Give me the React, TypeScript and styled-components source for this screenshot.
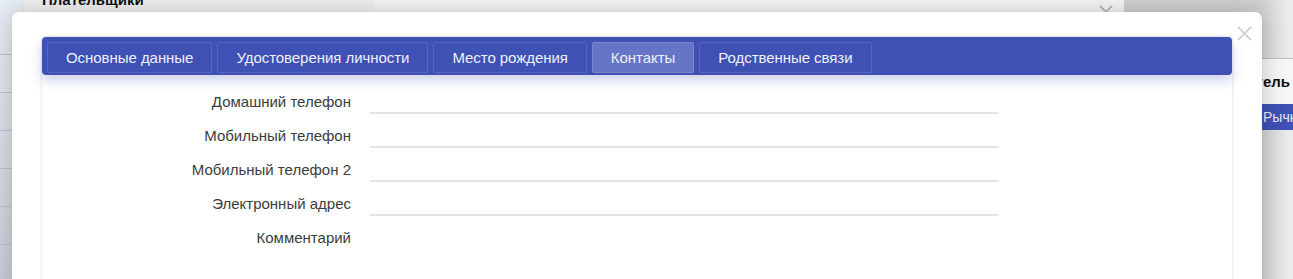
import styled, { createGlobalStyle } from 'styled-components'

const GlobalStyle = createGlobalStyle`
    html, body {
        margin: 0;
        padding: 0;
        width: 1293px;
        height: 279px;
        overflow: hidden;
        font-family: 'Liberation Sans', Arial, sans-serif;
    }
`

const Page = styled.div`
    position: relative;
    display: flex;
    width: 1293px;
    height: 279px;
    overflow: hidden;
    background: #ededed;
`

const Strip = styled.div`
    width: 24px;
    flex-shrink: 0;
    display: flex;
    flex-direction: column;
    padding-top: 54px;
    gap: 37px;
    background: linear-gradient(180deg, #e8eef6 0%, #d6dbe3 60%, #c9ced7 100%);
`

const StripLine = styled.div`
    height: 1px;
    background: #bfc4cc;
`

const LeftPanel = styled.div`
    width: 350px;
    flex-shrink: 0;
    background: #f1f1f1;
    padding-left: 18px;
    box-sizing: border-box;
`

const PanelTitle = styled.div`
    margin-top: -9px;
    font-size: 15px;
    font-weight: 700;
    color: #111;
`

const MiddlePanel = styled.div`
    width: 750px;
    flex-shrink: 0;
    background: #f7f7f7;
    display: flex;
    justify-content: flex-end;
    padding-right: 11px;
    box-sizing: border-box;
`

const CrossHolder = styled.div`
    margin-top: 5px;
`

const RightPanel = styled.div`
    flex: 1;
    min-width: 0;
    overflow: hidden;
    display: flex;
    flex-direction: column;
    background: linear-gradient(90deg, #d2d2d2 138px, #ececec 165px);
`

const RightHead = styled.div`
    height: 58px;
    border-bottom: 1px solid #bdbdbd;
`

const RightRow = styled.div`
    height: 45px;
    display: flex;
    align-items: center;
    justify-content: flex-end;
    padding-right: 3px;
    background: #f6f6f6;
    font-size: 15px;
    font-weight: 700;
    color: #111;
    white-space: nowrap;
`

const RightSelected = styled.div`
    height: 26px;
    display: flex;
    align-items: center;
    padding-left: 139px;
    background: #3f51b5;
    color: #e8eaf6;
    font-size: 14px;
    white-space: nowrap;
    overflow: hidden;
`

const Modal = styled.div`
    position: absolute;
    top: 12px;
    left: 12px;
    width: 1250px;
    height: 320px;
    background: #fff;
    border-radius: 7px;
    box-shadow: 0 0 24px rgba(0, 0, 0, 0.22);
    padding: 25px 30px 0;
    box-sizing: border-box;
`

const CloseButton = styled.div`
    position: absolute;
    top: 14px;
    right: 9px;
    width: 16px;
    height: 16px;
    display: flex;
`

const Card = styled.div`
    border-radius: 4px;
    box-shadow: 0 0 3px rgba(0, 0, 0, 0.18);
    height: 300px;
`

const TabBar = styled.div`
    display: flex;
    gap: 5px;
    height: 38px;
    padding: 5px;
    box-sizing: border-box;
    background: #3f51b5;
    border-radius: 4px;
    box-shadow: 0 6px 12px rgba(63, 81, 181, 0.25);
    position: relative;
`

const Tab = styled.div<{ $active?: boolean }>`
    display: flex;
    align-items: center;
    height: 29px;
    padding: 0 18px;
    border: 1px solid rgba(255, 255, 255, 0.12);
    border-radius: 2px;
    background: ${p => (p.$active ? '#6775c6' : 'transparent')};
    color: #eef0fa;
    font-size: 15px;
    letter-spacing: -0.05px;
    white-space: nowrap;
`

const Form = styled.div`
    display: grid;
    grid-template-columns: 309px 629px;
    grid-auto-rows: 34px;
    column-gap: 19px;
    padding-top: 10px;
`

const Label = styled.div`
    text-align: right;
    line-height: 34px;
    font-size: 15px;
    color: #3c3c3c;
    white-space: nowrap;
`

const Field = styled.div<{ $line?: boolean }>`
    height: 29px;
    box-sizing: border-box;
    border-bottom: 2px solid ${p => (p.$line ? '#e4e4e4' : 'transparent')};
`

const Cross = ({ size, color }: { size: number; color: string }) => (
    <svg width={size} height={size} viewBox='0 0 16 16'>
        <path d='M1 1 L15 15 M15 1 L1 15' stroke={color} strokeWidth='1.8' fill='none' />
    </svg>
)

const tabs = ['Основные данные', 'Удостоверения личности', 'Место рождения', 'Контакты', 'Родственные связи']

const fields = [
    { label: 'Домашний телефон', line: true },
    { label: 'Мобильный телефон', line: true },
    { label: 'Мобильный телефон 2', line: true },
    { label: 'Электронный адрес', line: true },
    { label: 'Комментарий', line: false },
]

export default function App() {
    return (
        <>
            <GlobalStyle />
            <Page>
                <Strip>
                    {[0, 1, 2, 3, 4, 5].map(i => (
                        <StripLine key={i} />
                    ))}
                </Strip>
                <LeftPanel>
                    <PanelTitle>Плательщики</PanelTitle>
                </LeftPanel>
                <MiddlePanel>
                    <CrossHolder>
                        <Cross size={14} color='#b5b5b5' />
                    </CrossHolder>
                </MiddlePanel>
                <RightPanel>
                    <RightHead />
                    <RightRow>Получатель</RightRow>
                    <RightSelected>Рычкова</RightSelected>
                </RightPanel>

                <Modal>
                    <CloseButton>
                        <Cross size={15} color='#cdcdcd' />
                    </CloseButton>
                    <Card>
                        <TabBar>
                            {tabs.map(t => (
                                <Tab key={t} $active={t === 'Контакты'}>
                                    {t}
                                </Tab>
                            ))}
                        </TabBar>
                        <Form>
                            {fields.map(f => (
                                <Row key={f.label} label={f.label} line={f.line} />
                            ))}
                        </Form>
                    </Card>
                </Modal>
            </Page>
        </>
    )
}

function Row({ label, line }: { label: string; line: boolean }) {
    return (
        <>
            <Label>{label}</Label>
            <Field $line={line} />
        </>
    )
}
